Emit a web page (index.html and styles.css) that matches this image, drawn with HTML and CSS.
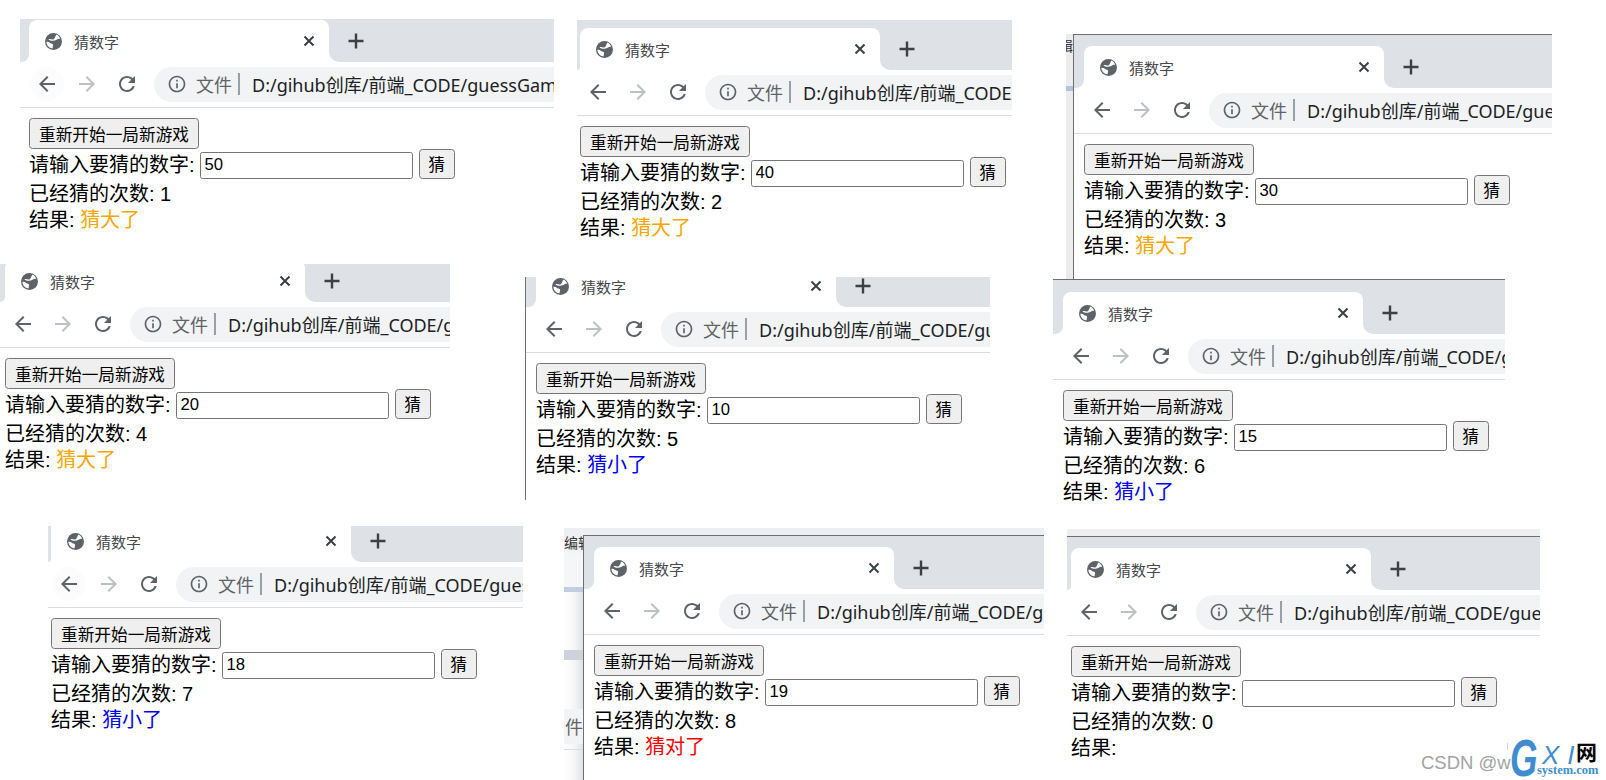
FILE: index.html
```html
<!DOCTYPE html>
<html lang="zh">
<head>
<meta charset="utf-8">
<title>猜数字</title>
<link rel="stylesheet" href="styles.css">
</head>
<body>
<svg class="sprite" aria-hidden="true">
  <symbol id="globe" viewBox="0 0 16 16"><circle cx="8" cy="8" r="8" fill="#5f6368"/><path fill="#fff" d="M3.200 5.800C5 5 6.500 6.600 8.200 5.800 9.600 5.100 9.600 3 10.800 1.500c1.700.8 3 2.300 3.500 4.300-1-.5-2.200-.3-3 .4-1 .8-1.900 1-3.200 1-1.500.1-3.400.2-4.900-1.400z"/><path fill="#fff" d="M1.300 8.300c1.200-.3 2.400.1 3.200.9.800.8 2.100.6 2.800 1.300.6.700.2 1.700 0 2.600-.1.500-.1 1-.4 1.400-3.100-.3-5.500-3-5.600-6.200z"/></symbol>
  <symbol id="close" viewBox="0 0 12 12"><path d="M1.500 1.500l9 9m0-9l-9 9" stroke="#3c4043" stroke-width="2" fill="none"/></symbol>
  <symbol id="plus" viewBox="0 0 16 16"><path d="M8 0.500v15M0.500 8h15" stroke="#3c4043" stroke-width="2.400" fill="none"/></symbol>
  <symbol id="back" viewBox="0 0 24 24"><path d="M20 11H7.830l5.590-5.590L12 4l-8 8 8 8 1.410-1.410L7.830 13H20v-2z"/></symbol>
  <symbol id="forward" viewBox="0 0 24 24"><path d="M4 11h12.170l-5.590-5.590L12 4l8 8-8 8-1.410-1.410L16.170 13H4v-2z"/></symbol>
  <symbol id="reload" viewBox="0 0 24 24"><path d="M17.650 6.350C16.200 4.900 14.210 4 12 4c-4.420 0-7.990 3.580-7.990 8s3.570 8 7.990 8c3.730 0 6.840-2.550 7.730-6h-2.080c-.82 2.330-3.040 4-5.650 4-3.310 0-6-2.690-6-6s2.690-6 6-6c1.660 0 3.140.69 4.220 1.780L13 11h7V4l-2.350 2.350z"/></symbol>
  <symbol id="info" viewBox="0 0 24 24"><path d="M11 7h2v2h-2zm0 4h2v6h-2zm1-9C6.480 2 2 6.480 2 12s4.480 10 10 10 10-4.480 10-10S17.520 2 12 2zm0 18c-4.410 0-8-3.590-8-8s3.590-8 8-8 8 3.590 8 8-3.590 8-8 8z"/></symbol>
</svg>

<div class="under u3"><span class="u-text">辑</span><i class="u-blue"></i></div>
<div class="under u8">
  <span class="u-text">编辑</span>
  <i class="u-blue"></i>
  <i class="u-grey"></i>
  <span class="u-cell">件</span>
  <i class="u-line"></i>
</div>
<div class="under u9"></div>

<section class="shot p1">
  <div class="strip"><div class="edge"><i></i></div><div class="tab"><svg class="globe"><use href="#globe"/></svg><span class="title">猜数字</span><svg class="close"><use href="#close"/></svg></div><div class="rest"><i><svg class="plus"><use href="#plus"/></svg></i></div></div>
  <div class="toolbar"><svg class="nav hover"><use href="#back"/></svg><svg class="nav off"><use href="#forward"/></svg><svg class="nav"><use href="#reload"/></svg><div class="omni"><svg class="info"><use href="#info"/></svg><span class="sec">文件</span><i class="sep"></i><span class="url">D:/gihub创库/前端_CODE/guessGame.html</span></div></div>
  <div class="page"><button class="restart">重新开始一局新游戏</button><div class="row"><span class="ask">请输入要猜的数字:</span><input class="num" value="50"><button class="go">猜</button></div><div class="line">已经猜的次数: 1</div><div class="line">结果: <span class="high">猜大了</span></div></div>
</section>

<section class="shot p2">
  <div class="strip"><div class="edge"><i></i></div><div class="tab"><svg class="globe"><use href="#globe"/></svg><span class="title">猜数字</span><svg class="close"><use href="#close"/></svg></div><div class="rest"><i><svg class="plus"><use href="#plus"/></svg></i></div></div>
  <div class="toolbar"><svg class="nav"><use href="#back"/></svg><svg class="nav off"><use href="#forward"/></svg><svg class="nav"><use href="#reload"/></svg><div class="omni"><svg class="info"><use href="#info"/></svg><span class="sec">文件</span><i class="sep"></i><span class="url">D:/gihub创库/前端_CODE/guessGame.html</span></div></div>
  <div class="page"><button class="restart">重新开始一局新游戏</button><div class="row"><span class="ask">请输入要猜的数字:</span><input class="num" value="40"><button class="go">猜</button></div><div class="line">已经猜的次数: 2</div><div class="line">结果: <span class="high">猜大了</span></div></div>
</section>

<section class="shot p3">
  <div class="strip"><div class="edge"><i></i></div><div class="tab"><svg class="globe"><use href="#globe"/></svg><span class="title">猜数字</span><svg class="close"><use href="#close"/></svg></div><div class="rest"><i><svg class="plus"><use href="#plus"/></svg></i></div></div>
  <div class="toolbar"><svg class="nav"><use href="#back"/></svg><svg class="nav off"><use href="#forward"/></svg><svg class="nav"><use href="#reload"/></svg><div class="omni"><svg class="info"><use href="#info"/></svg><span class="sec">文件</span><i class="sep"></i><span class="url">D:/gihub创库/前端_CODE/guessGame.html</span></div></div>
  <div class="page"><button class="restart">重新开始一局新游戏</button><div class="row"><span class="ask">请输入要猜的数字:</span><input class="num" value="30"><button class="go">猜</button></div><div class="line">已经猜的次数: 3</div><div class="line">结果: <span class="high">猜大了</span></div></div>
</section>

<section class="shot p4">
  <div class="strip"><div class="edge"><i></i></div><div class="tab"><svg class="globe"><use href="#globe"/></svg><span class="title">猜数字</span><svg class="close"><use href="#close"/></svg></div><div class="rest"><i><svg class="plus"><use href="#plus"/></svg></i></div></div>
  <div class="toolbar"><svg class="nav"><use href="#back"/></svg><svg class="nav off"><use href="#forward"/></svg><svg class="nav"><use href="#reload"/></svg><div class="omni"><svg class="info"><use href="#info"/></svg><span class="sec">文件</span><i class="sep"></i><span class="url">D:/gihub创库/前端_CODE/guessGame.html</span></div></div>
  <div class="page"><button class="restart">重新开始一局新游戏</button><div class="row"><span class="ask">请输入要猜的数字:</span><input class="num" value="20"><button class="go">猜</button></div><div class="line">已经猜的次数: 4</div><div class="line">结果: <span class="high">猜大了</span></div></div>
</section>

<section class="shot p5">
  <div class="strip"><div class="edge"><i></i></div><div class="tab"><svg class="globe"><use href="#globe"/></svg><span class="title">猜数字</span><svg class="close"><use href="#close"/></svg></div><div class="rest"><i><svg class="plus"><use href="#plus"/></svg></i></div></div>
  <div class="toolbar"><svg class="nav"><use href="#back"/></svg><svg class="nav off"><use href="#forward"/></svg><svg class="nav"><use href="#reload"/></svg><div class="omni"><svg class="info"><use href="#info"/></svg><span class="sec">文件</span><i class="sep"></i><span class="url">D:/gihub创库/前端_CODE/guessGame.html</span></div></div>
  <div class="page"><button class="restart">重新开始一局新游戏</button><div class="row"><span class="ask">请输入要猜的数字:</span><input class="num" value="10"><button class="go">猜</button></div><div class="line">已经猜的次数: 5</div><div class="line">结果: <span class="low">猜小了</span></div></div>
</section>

<section class="shot p6">
  <div class="strip"><div class="edge"><i></i></div><div class="tab"><svg class="globe"><use href="#globe"/></svg><span class="title">猜数字</span><svg class="close"><use href="#close"/></svg></div><div class="rest"><i><svg class="plus"><use href="#plus"/></svg></i></div></div>
  <div class="toolbar"><svg class="nav"><use href="#back"/></svg><svg class="nav off"><use href="#forward"/></svg><svg class="nav"><use href="#reload"/></svg><div class="omni"><svg class="info"><use href="#info"/></svg><span class="sec">文件</span><i class="sep"></i><span class="url">D:/gihub创库/前端_CODE/guessGame.html</span></div></div>
  <div class="page"><button class="restart">重新开始一局新游戏</button><div class="row"><span class="ask">请输入要猜的数字:</span><input class="num" value="15"><button class="go">猜</button></div><div class="line">已经猜的次数: 6</div><div class="line">结果: <span class="low">猜小了</span></div></div>
</section>

<section class="shot p7">
  <div class="strip"><div class="edge"><i></i></div><div class="tab"><svg class="globe"><use href="#globe"/></svg><span class="title">猜数字</span><svg class="close"><use href="#close"/></svg></div><div class="rest"><i><svg class="plus"><use href="#plus"/></svg></i></div></div>
  <div class="toolbar"><svg class="nav hover"><use href="#back"/></svg><svg class="nav off"><use href="#forward"/></svg><svg class="nav"><use href="#reload"/></svg><div class="omni"><svg class="info"><use href="#info"/></svg><span class="sec">文件</span><i class="sep"></i><span class="url">D:/gihub创库/前端_CODE/guessGame.html</span></div></div>
  <div class="page"><button class="restart">重新开始一局新游戏</button><div class="row"><span class="ask">请输入要猜的数字:</span><input class="num" value="18"><button class="go">猜</button></div><div class="line">已经猜的次数: 7</div><div class="line">结果: <span class="low">猜小了</span></div></div>
</section>

<section class="shot p8">
  <div class="strip"><div class="edge"><i></i></div><div class="tab"><svg class="globe"><use href="#globe"/></svg><span class="title">猜数字</span><svg class="close"><use href="#close"/></svg></div><div class="rest"><i><svg class="plus"><use href="#plus"/></svg></i></div></div>
  <div class="toolbar"><svg class="nav"><use href="#back"/></svg><svg class="nav off"><use href="#forward"/></svg><svg class="nav"><use href="#reload"/></svg><div class="omni"><svg class="info"><use href="#info"/></svg><span class="sec">文件</span><i class="sep"></i><span class="url">D:/gihub创库/前端_CODE/guessGame.html</span></div></div>
  <div class="page"><button class="restart">重新开始一局新游戏</button><div class="row"><span class="ask">请输入要猜的数字:</span><input class="num" value="19"><button class="go">猜</button></div><div class="line">已经猜的次数: 8</div><div class="line">结果: <span class="hit">猜对了</span></div></div>
</section>

<section class="shot p9">
  <div class="strip"><div class="edge"><i></i></div><div class="tab"><svg class="globe"><use href="#globe"/></svg><span class="title">猜数字</span><svg class="close"><use href="#close"/></svg></div><div class="rest"><i><svg class="plus"><use href="#plus"/></svg></i></div></div>
  <div class="toolbar"><svg class="nav"><use href="#back"/></svg><svg class="nav off"><use href="#forward"/></svg><svg class="nav"><use href="#reload"/></svg><div class="omni"><svg class="info"><use href="#info"/></svg><span class="sec">文件</span><i class="sep"></i><span class="url">D:/gihub创库/前端_CODE/guessGame.html</span></div></div>
  <div class="page"><button class="restart">重新开始一局新游戏</button><div class="row"><span class="ask">请输入要猜的数字:</span><input class="num" value=""><button class="go">猜</button></div><div class="line">已经猜的次数: 0</div><div class="line">结果:</div></div>
</section>

<div class="csdn">CSDN @w</div>
<div class="mark">
  <i class="mark-tick"></i>
  <span class="mark-g">G</span>
  <span class="mark-xi">XI</span>
  <span class="mark-wang">网</span>
  <span class="mark-sys">system.com</span>
</div>
</body>
</html>
```
FILE: styles.css
```css
* { box-sizing: border-box; }
html, body { margin: 0; padding: 0; }
body {
  position: relative;
  width: 1606px;
  height: 780px;
  overflow: hidden;
  background: #fff;
  color: #000;
  font-family: "Liberation Sans", "Noto Sans CJK SC", sans-serif;
}
.sprite { position: absolute; width: 0; height: 0; }

/* one pasted screenshot on the canvas */
.shot {
  position: absolute;
  overflow: hidden;
  background: #fff;
  --tl: 10px;
  --band: 11px;
  --lift: 0px;
}
.p1 { left: 20px; top: 19px; width: 534px; height: 221px; --tl: 9px; --band: 1px; }
.p2 { left: 577px; top: 20px; width: 435px; height: 225px; --tl: 3px; --band: 8px; }
.p3 { left: 1073px; top: 34px; width: 479px; height: 245px; border-left: 1px solid #6e6e6e; border-top: 1px solid #6e6e6e; }
.p4 { left: 0; top: 264px; width: 450px; height: 236px; --tl: 5px; --band: 0px; --lift: -4px; }
.p5 { left: 525px; top: 277px; width: 465px; height: 223px; --band: 0px; --lift: -12px; border-left: 1px solid #6e6e6e; }
.p6 { left: 1053px; top: 279px; width: 452px; height: 231px; --band: 12px; border-top: 1px solid #6e6e6e; }
.p7 { left: 48px; top: 526px; width: 475px; height: 214px; --tl: 3px; --band: 0px; --lift: -6px; }
.p8 { left: 583px; top: 535px; width: 461px; height: 245px; border-left: 1px solid #6e6e6e; border-top: 1px solid #6e6e6e; }
.p9 { left: 1067px; top: 536px; width: 473px; height: 244px; --tl: 4px; border-top: 1px solid #6e6e6e; }

/* tab strip */
.strip {
  display: flex;
  height: calc(42px + var(--band));
  margin-top: var(--lift);
  padding-top: var(--band);
  background: #dee1e6;
}
.edge { flex: 0 0 var(--tl); background: #fff; }
.edge i { display: block; height: 100%; background: #dee1e6; border-bottom-right-radius: 8px; }
.tab {
  flex: 0 0 300px;
  display: flex;
  align-items: center;
  padding: 0 14px 0 16px;
  background: #fff;
  border-radius: 8px 8px 0 0;
}
.globe { width: 17px; height: 17px; flex: none; }
.title { margin-left: 12px; font-size: 15px; color: #45484c; white-space: nowrap; }
.close { width: 12px; height: 12px; margin-left: auto; flex: none; }
.rest { flex: 1; background: #fff; }
.rest i {
  display: flex;
  align-items: center;
  height: 100%;
  padding-left: 19px;
  background: #dee1e6;
  border-bottom-left-radius: 10px;
}
.plus { width: 16px; height: 16px; }

/* toolbar */
.toolbar {
  display: flex;
  align-items: center;
  gap: 16px;
  height: 46px;
  padding: 5px 0 6px calc(var(--tl) + 6px);
  border-bottom: 1px solid #dadce0;
  background: #fff;
}
.nav { width: 24px; height: 24px; flex: none; fill: #5f6368; }
.nav.off { fill: #bdc1c6; }
.nav.hover { background: #fcfcfc; border-radius: 50%; box-shadow: 0 0 0 5px #fcfcfc; }
.omni {
  flex: 1;
  min-width: 0;
  height: 35px;
  margin-left: -1px;
  display: flex;
  align-items: center;
  overflow: hidden;
  white-space: nowrap;
  background: #f1f3f4;
  border-radius: 18px 0 0 18px;
  padding-left: 13px;
}
.info { width: 20px; height: 20px; flex: none; fill: #5f6368; }
.sec { margin-left: 9px; font-size: 18px; color: #5f6368; }
.sep { flex: none; width: 2px; height: 22px; margin: 0 12px 0 6px; background: #9aa0a6; }
.url { font-family: "Noto Sans", "Noto Sans CJK SC", sans-serif; font-size: 18px; color: #202124; }

/* page body */
.page { padding: 10px 0 0 var(--tl); font-size: 20px; }
.restart, .go {
  display: block;
  padding: 0;
  font-family: inherit;
  font-size: 16.670px;
  color: #000;
  background: #efefef;
  border: 1.250px solid #767676;
  border-radius: 3.500px;
}
.restart { width: 170px; height: 31px; }
.row { display: flex; height: 31px; align-items: flex-start; }
.ask { line-height: 33px; margin-right: 5px; white-space: nowrap; }
.num {
  width: 213px;
  height: 27px;
  margin: 3px 6px 0 0;
  padding: 0 4px 2px;
  font-family: inherit;
  font-size: 16.670px;
  color: #000;
  background: #fff;
  border: 1.250px solid #767676;
  border-radius: 2.500px;
}
.go { width: 36px; height: 30px; }
.line { height: 26px; line-height: 28px; white-space: nowrap; }
.high { color: #ffa500; }
.low { color: #0000ff; }
.hit { color: #ff0000; }

/* windows lying behind the screenshots */
.under { position: absolute; overflow: hidden; display: block; font-size: 14px; color: #333; }
.u3 { left: 1066px; top: 34px; width: 8px; height: 245px; background: #ececec; }
.u3 .u-text { position: absolute; left: -7px; top: 1px; }
.u3 .u-blue { position: absolute; left: 0; top: 52px; width: 100%; height: 5px; background: #b6c3d6; }
.u8 {
  left: 564px;
  top: 528px;
  width: 480px;
  height: 252px;
  display: flex;
  flex-direction: column;
  background: linear-gradient(90deg, #fff 0, #f6f6f7 10px, #dfe0e2 20px);
}
.u8 .u-text { height: 59px; padding-top: 4px; background: linear-gradient(#eceef1, #f5f6f8 30px); }
.u8 .u-blue { display: block; height: 5px; background: #c3cde0; flex: none; }
.u8 .u-grey { display: block; height: 10px; margin-top: 58px; background: #ced3db; flex: none; }
.u8 .u-cell { height: 35px; margin-top: 49px; padding-left: 1px; font-size: 18px; line-height: 38px; color: #5f6368; background: #f1f3f4; flex: none; }
.u8 .u-line { display: block; height: 1px; margin-top: 5px; background: #dadce0; flex: none; }
.u9 { left: 1067px; top: 529px; width: 473px; height: 8px; background: #eeeeef; }

/* watermarks */
.csdn { position: absolute; left: 1421px; top: 752px; font-size: 18.500px; line-height: 22px; color: #a3a3a3; white-space: nowrap; }
.mark { position: absolute; left: 1507px; top: 738px; width: 99px; height: 42px; }
.mark-tick { position: absolute; left: 0; top: 5px; width: 1px; height: 7px; background: #f6c9c9; }
.mark-g {
  position: absolute; left: 3px; top: -5px;
  font-size: 52px; line-height: 50px; font-style: italic; font-weight: 700; color: #3f8dd0;
  transform: scaleX(.68);
  transform-origin: left top;
}
.mark-xi {
  position: absolute; left: 35px; top: 3px;
  font-size: 26px; line-height: 28px; font-style: italic; letter-spacing: 8px; color: #3f8dd0;
}
.mark-wang { position: absolute; left: 69px; top: 2px; font-size: 21px; line-height: 26px; font-weight: 700; color: #000; }
.mark-sys {
  position: absolute; left: 30px; top: 25px;
  font-family: "Liberation Serif", serif; font-size: 12.500px; line-height: 15px; font-weight: 700; color: #3f8dd0; white-space: nowrap;
}
```
